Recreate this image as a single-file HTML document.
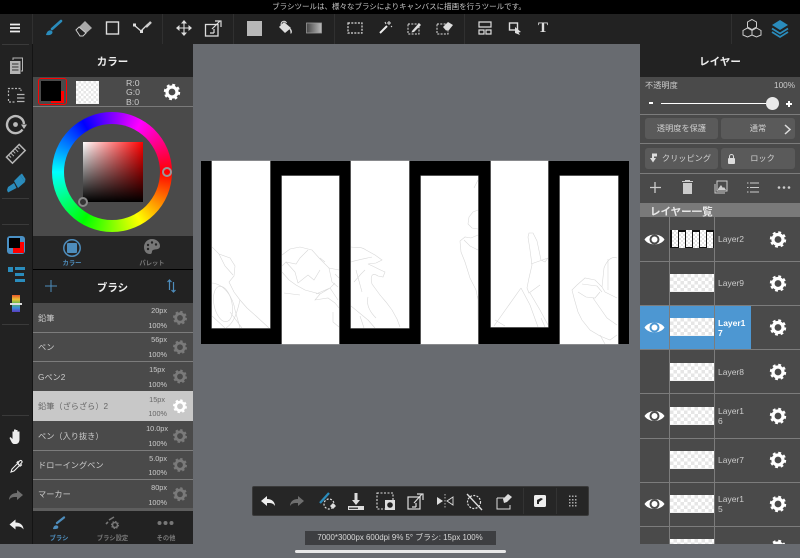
<!DOCTYPE html>
<html><head><meta charset="utf-8">
<style>
html,body{margin:0;padding:0}
body{width:800px;height:558px;overflow:hidden;position:relative;background:#686b70;font-family:"Liberation Sans","Noto Sans CJK JP",sans-serif;color:#ddd}
div{position:absolute;box-sizing:border-box}
.t{white-space:nowrap;line-height:1}
.c{transform:translateX(-50%)}
.chk{background-color:#fff;background-image:conic-gradient(#e6e6e6 25%,#fff 0 50%,#e6e6e6 0 75%,#fff 0);background-size:7px 7px}
.sep{background:#303030}
.btn{background:#5a5a5a;border-radius:3px;height:21px;font-size:8.2px;color:#d0d0d0;text-align:center;line-height:22.5px}
.ln{background:#7c7c7c;height:1px}
.p{background:#fff;box-shadow:0 0 0 .5px #aaa}
svg{position:absolute;overflow:visible}
</style></head><body>
<svg width="0" height="0" style="position:absolute"><defs>
<g id="gear"><circle r="5" fill="none" stroke="currentColor" stroke-width="3.2"/><circle r="7" fill="none" stroke="currentColor" stroke-width="2.4" stroke-dasharray="2.8 2.7"/></g>
<g id="eye"><path d="M-10 0C-6-6.500 6-6.500 10 0C6 6.500-6 6.500-10 0Z" fill="#fff"/><circle r="4" fill="none" stroke="currentColor" stroke-width="2"/></g>
<path id="undo" d="M-7 0L-1-5V-2C4-2 7 1 7 5C5 2 3 2-1 2V5Z" fill="currentColor"/>
<path id="redo" d="M7 0L1-5V-2C-4-2-7 1-7 5C-5 2-3 2 1 2V5Z" fill="currentColor"/>
<clipPath id="panels"><rect x="212" y="161" width="57.500" height="167"/><rect x="281.500" y="176" width="57.500" height="168"/><rect x="351" y="161" width="57.500" height="167"/><rect x="420.500" y="176" width="57.500" height="168"/><rect x="490.500" y="161" width="57.500" height="166"/><rect x="560" y="176" width="57.500" height="168"/></clipPath>
<linearGradient id="gr"><stop offset="0" stop-color="#444"/><stop offset="1" stop-color="#bbb"/></linearGradient>
<linearGradient id="rb" x1="0" y1="0" x2="0" y2="1"><stop offset="0" stop-color="#e8562a"/><stop offset=".25" stop-color="#ecc034"/><stop offset=".5" stop-color="#5cb84a"/><stop offset=".75" stop-color="#3a8ed8"/><stop offset="1" stop-color="#5a3cc0"/></linearGradient>
</defs></svg>

<!-- status -->
<div style="left:0;top:0;width:800px;height:14px;background:#000"></div>
<div class="t c" style="left:399px;top:3px;font-size:7.500px;color:#c8c8c8">ブラシツールは、様々なブラシによりキャンバスに描画を行うツールです。</div>

<!-- toolbar -->
<div style="left:0;top:14px;width:800px;height:30px;background:#222"></div>
<div class="sep" style="left:32px;top:14px;width:1px;height:30px"></div>
<div class="sep" style="left:162px;top:14px;width:1px;height:30px"></div>
<div class="sep" style="left:233px;top:14px;width:1px;height:30px"></div>
<div class="sep" style="left:334px;top:14px;width:1px;height:30px"></div>
<div class="sep" style="left:464px;top:14px;width:1px;height:30px"></div>
<div class="sep" style="left:731px;top:14px;width:1px;height:30px"></div>
<svg style="left:0;top:0" width="800" height="44" fill="none" stroke="#ddd">
<path d="M10 24.500H20M10 28H20M10 31.500H20" stroke="#eee" stroke-width="1.800"/>
<path d="M52 29L61 21" stroke="#2a8cbc" stroke-width="2.600" stroke-linecap="round"/><path d="M46 35c1-4 3-5 5-4.500s2 3 0 4c-1 .6-3 .8-5 .5z" fill="#2a8cbc" stroke="none"/>
<path d="M76 30L85 21L92 28L83 36H80Z" fill="#aaa" stroke="none"/><path d="M76 30L80 36H83L86 33L79 27Z" fill="#222" stroke="#ccc"/>
<rect x="106.500" y="22" width="12" height="12" stroke-width="1.400"/>
<path d="M134 25L141 31L148 24" stroke-width="1.300"/><rect x="133" y="23.500" width="3" height="3" fill="#ddd" stroke="none"/><rect x="140" y="30" width="3" height="3" fill="#ddd" stroke="none"/><path d="M146 27L151 22" stroke="#ccc" stroke-width="2.500"/>
<path d="M184 21V35M177 28H191" stroke-width="1.100"/><path d="M181 23.500L184 20L187 23.500ZM181 32.500L184 36L187 32.500ZM179.500 25L176 28L179.500 31ZM188.500 25L192 28L188.500 31Z" fill="#ddd" stroke="none"/>
<rect x="205.500" y="24.500" width="12.500" height="11.500" stroke-width="1.300"/><path d="M212 29L220 21M215 21H221V27M210 33H214M214 29V33" stroke-width="1.200"/>
<rect x="247" y="21" width="15" height="15" fill="#b8b8b8" stroke="none"/>
<path d="M279 27L284 22L291 28L285 33Z" fill="#ddd" stroke="none"/><path d="M281 25C281 21 285 20 286.500 23" stroke-width="1"/><path d="M290 29C292 31 291 33 290.500 33" stroke="#ddd" stroke-width="1.500"/>
<rect x="306.500" y="23" width="15" height="10" fill="url(#gr)" stroke="#999" stroke-width=".8"/>
<rect x="348" y="23" width="14" height="10" stroke-dasharray="2 1.300" stroke-width="1.200"/>
<path d="M380 33L387 26" stroke="#eee" stroke-width="2"/><path d="M389 21V25M387 23H391M385 22L386 24M391 26L392 27" stroke-width="1"/>
<rect x="408" y="24" width="11" height="10" stroke-dasharray="2 1.300" stroke-width="1"/><path d="M412 31L419 23L421 25L414 32L411.500 32.500Z" fill="#ddd" stroke="none"/>
<rect x="437" y="24" width="11" height="10" stroke-dasharray="2 1.300" stroke-width="1"/><path d="M443 27L448 22L453 25L449 30L446 30.500Z" fill="#ddd" stroke="none"/>
<path d="M479 22H491V27H479ZM479 30H484V34H479ZM486 30H491V34H486Z" stroke-width="1.200"/>
<rect x="509.500" y="23" width="8" height="7" stroke-width="1.400"/><path d="M515 27L521 32L518.500 32.500L520 35L515 33Z" fill="#ddd" stroke="none"/>
<path d="M752 19.500L756.500 22V27L752 29.500L747.500 27V22ZM747.500 28L752 30.500V35L747.500 37L743 35V30.500ZM756.500 28L761 30.500V35L756.500 37L752 35V30.500Z" stroke="#ccc" stroke-width="1"/>
<path d="M780 20L788 25L780 30L772 25Z" fill="#2a8cbc" stroke="none"/><path d="M772 28.500L780 33.500L788 28.500M772 32L780 37L788 32" stroke="#2a8cbc" stroke-width="1.800"/>
</svg>
<div class="t" style="left:538px;top:21px;font-family:'Liberation Serif',serif;font-weight:bold;font-size:15px;color:#ddd">T</div>

<!-- left bar -->
<div style="left:0;top:44px;width:33px;height:500px;background:#222"></div>
<div style="left:32px;top:44px;width:1px;height:500px;background:#141414"></div>
<div class="sep" style="left:2px;top:44px;width:27px;height:1px;background:#3a3a3a"></div>
<div class="sep" style="left:2px;top:198px;width:27px;height:1px;background:#3a3a3a"></div>
<div class="sep" style="left:2px;top:223.500px;width:27px;height:1px;background:#3a3a3a"></div>
<div class="sep" style="left:2px;top:324px;width:27px;height:1px;background:#3a3a3a"></div>
<div class="sep" style="left:2px;top:415px;width:27px;height:1px;background:#3a3a3a"></div>
<svg style="left:0;top:44px" width="33" height="500" fill="none" stroke="#b5b5b5">
<path d="M13 16V14H22.500V27H21" stroke-width="1"/><rect x="10" y="17" width="10.500" height="13" fill="#b5b5b5" stroke="none"/><path d="M12 20H18.500M12 23H18.500M12 26H18.500" stroke="#333" stroke-width="1"/>
<path d="M8.500 52V44.500H21V47M8.500 55V58H15" stroke-dasharray="2 1.500" stroke-width="1.200"/><path d="M17 50.500H24.500M17 54H24.500M17 57.500H24.500" stroke-width="1.300"/>
<path d="M22.500 85.500A8.500 8.500 0 1 1 24 80" stroke-width="2.400" stroke="#bbb"/><circle cx="15.500" cy="80.500" r="2.400" fill="#bbb" stroke="none"/><path d="M21 80.500H27L24 85Z" fill="#bbb" stroke="none"/>
<g transform="rotate(-45 16 110)"><rect x="7" y="105.500" width="18" height="8.500" stroke-width="1.500"/><path d="M10 105.500V109M13 105.500V110M16 105.500V109M19 105.500V110M22 105.500V109" stroke-width="1"/></g>
<path d="M14 137L20 131L25 138L18 144Z" fill="#2a8cbc" stroke="none"/><path d="M20 131L22 129.500L25.500 135L25 138Z" fill="#2a8cbc" stroke="none"/><path d="M8 143L14 139L16.500 144L8 148.500L7 146Z" fill="#2a8cbc" stroke="none"/>
</svg>
<div style="left:7px;top:236px;width:18px;height:18px;border-radius:3px;background:#4a90c4"></div>
<div style="left:13px;top:242px;width:11px;height:10.500px;background:#f00"></div>
<div style="left:9px;top:237.500px;width:10.500px;height:10.500px;background:#000"></div>
<svg style="left:0;top:260px" width="33" height="60" fill="#2a8cbc" stroke="none">
<rect x="8" y="7" width="5" height="5"/><rect x="15" y="7" width="10" height="3"/><rect x="15" y="13" width="9" height="3"/><rect x="15" y="19" width="10" height="3"/>
<rect x="12" y="35" width="8" height="17" style="fill:url(#rb)"/><rect x="10" y="43" width="12" height="2" fill="#ddd"/>
</svg>
<svg style="left:0;top:420px" width="33" height="120" fill="none">
<path d="M11.500 22L9.500 18L10.500 17L12.500 19V11.500L14 11.500V16V9.500H15.800V16V10H17.500V16.500V11.500H19.500V19.500C19.500 22 18 24 16 24H14C13 24 12 23 11.500 22Z" fill="#eee"/>
<path d="M12 49L11 52L14 51L19.500 45.500L17.500 43.500ZM18.500 42.500L19.500 41C21 39.500 23 41.500 21.500 43L20.500 44L21.500 45L20.500 46L17 42.500L18 41.500Z" stroke="#eee" stroke-width="1.100"/>
<use href="#redo" x="16" y="75" color="#6e6e6e"/>
<use href="#undo" x="16.500" y="104.500" color="#eee"/>
</svg>

<!-- color panel -->
<div style="left:33px;top:44px;width:160px;height:500px;background:#222"></div>
<div class="t c" style="left:112.500px;top:57px;font-size:10.500px;font-weight:bold;color:#eee">カラー</div>
<div style="left:33px;top:77px;width:160px;height:159px;background:#4a4a4a"></div>
<div style="left:33px;top:106px;width:160px;height:1px;background:#7a7a7a"></div>
<div style="left:38px;top:78px;width:29px;height:27px;border:1.500px solid #f00;border-radius:3px"></div>
<div style="left:41px;top:81px;width:20px;height:20px;background:#000"></div>
<div style="left:61px;top:91px;width:3px;height:12px;background:#f00"></div>
<div style="left:51px;top:100.500px;width:13px;height:2.500px;background:#f00"></div>
<div class="chk" style="left:75.500px;top:81px;width:23px;height:23px;background-size:5px 5px"></div>
<div class="t" style="left:126px;top:79px;font-size:8.700px;color:#ccc;line-height:9.400px">R:0<br>G:0<br>B:0</div>
<svg style="left:171.500px;top:92px;color:#fff"><use href="#gear"/></svg>
<!-- wheel -->
<div style="left:52px;top:112px;width:120px;height:120px;border-radius:50%;background:conic-gradient(from 90deg,#f00,#ff0,#0f0,#0ff,#00f,#f0f,#f00)"></div>
<div style="left:64px;top:124px;width:96px;height:96px;border-radius:50%;background:#4a4a4a"></div>
<div style="left:82.500px;top:142px;width:60px;height:60px;background:linear-gradient(to bottom,transparent,#000),linear-gradient(to right,#fff,#f00)"></div>
<div style="left:162px;top:167px;width:10px;height:10px;border-radius:50%;border:2px solid #999"></div>
<div style="left:78px;top:197px;width:10px;height:10px;border-radius:50%;border:2px solid #888;background:#333"></div>
<!-- tabs -->
<div style="left:33px;top:236px;width:160px;height:33px;background:#252525"></div>
<div style="left:33px;top:269px;width:160px;height:1px;background:#000"></div>
<svg style="left:33px;top:236px" width="160" height="24">
<circle cx="39" cy="12" r="8.200" fill="none" stroke="#4e8dbc" stroke-width="1.500"/><rect x="34" y="7" width="10" height="10" fill="#4e8dbc" rx="1"/>
<path d="M119 3C114 3 111 7 111 11C111 15 113 18 117 18C120 18 118 15 120 14C122 13 127 14 127 10C127 6 123 3 119 3Z" fill="#777"/><circle cx="115" cy="9" r="1.200" fill="#252525"/><circle cx="119" cy="6.500" r="1.200" fill="#252525"/><circle cx="123" cy="8.500" r="1.200" fill="#252525"/><circle cx="115" cy="13" r="1.200" fill="#252525"/>
</svg>
<div class="t c" style="left:72px;top:260.500px;font-size:6.300px;font-weight:bold;color:#4e8dbc">カラー</div>
<div class="t c" style="left:152px;top:260.500px;font-size:6.300px;font-weight:bold;color:#777">パレット</div>
<!-- brush header -->
<svg style="left:33px;top:270px" width="160" height="33" fill="none" stroke="#4e8dbc">
<path d="M18 10V22M12 16H24" stroke-width="1"/>
<path d="M136.500 10V20M134.500 12L136.500 10L138.500 12M140.500 12V22M138.500 20L140.500 22L142.500 20" stroke-width="1.200"/>
</svg>
<div class="t c" style="left:112.500px;top:282.500px;font-size:10.500px;font-weight:bold;color:#eee">ブラシ</div>
<!-- brushes -->
<div style="left:33px;top:303px;width:160px;height:208px;background:#4a4a4a"></div>
<div class="ln" style="left:33px;top:332px;width:160px"></div>
<div class="ln" style="left:33px;top:361px;width:160px"></div>
<div style="left:33px;top:391px;width:160px;height:30px;background:#c8c8c8"></div>
<div class="ln" style="left:33px;top:450px;width:160px"></div>
<div class="ln" style="left:33px;top:479px;width:160px"></div>
<div class="ln" style="left:33px;top:508px;width:160px;height:3px;background:#5e5e5e"></div>
<div class="t" style="left:38px;top:315px;font-size:8.200px;color:#ccc">鉛筆</div>
<div class="t" style="left:38px;top:344px;font-size:8.200px;color:#ccc">ペン</div>
<div class="t" style="left:38px;top:374px;font-size:8.200px;color:#ccc">Gペン2</div>
<div class="t" style="left:38px;top:403px;font-size:8.200px;color:#666">鉛筆（ざらざら）2</div>
<div class="t" style="left:38px;top:433px;font-size:8.200px;color:#ccc">ペン（入り抜き）</div>
<div class="t" style="left:38px;top:462px;font-size:8.200px;color:#ccc">ドローイングペン</div>
<div class="t" style="left:38px;top:491px;font-size:8.200px;color:#ccc">マーカー</div>
<div class="t" style="right:633px;top:307px;font-size:7.300px;color:#ccc">20px</div>
<div class="t" style="right:633px;top:321.500px;font-size:7.300px;color:#ccc">100%</div>
<div class="t" style="right:633px;top:336px;font-size:7.300px;color:#ccc">56px</div>
<div class="t" style="right:633px;top:350.500px;font-size:7.300px;color:#ccc">100%</div>
<div class="t" style="right:635px;top:366px;font-size:7.300px;color:#ccc">15px</div>
<div class="t" style="right:633px;top:380.500px;font-size:7.300px;color:#ccc">100%</div>
<div class="t" style="right:635px;top:395.500px;font-size:7.300px;color:#666">15px</div>
<div class="t" style="right:633px;top:410px;font-size:7.300px;color:#666">100%</div>
<div class="t" style="right:632px;top:425px;font-size:7.300px;color:#ccc">10.0px</div>
<div class="t" style="right:633px;top:439.500px;font-size:7.300px;color:#ccc">100%</div>
<div class="t" style="right:633px;top:454.500px;font-size:7.300px;color:#ccc">5.0px</div>
<div class="t" style="right:633px;top:468.500px;font-size:7.300px;color:#ccc">100%</div>
<div class="t" style="right:633px;top:484px;font-size:7.300px;color:#ccc">80px</div>
<div class="t" style="right:633px;top:498.500px;font-size:7.300px;color:#ccc">100%</div>
<svg style="left:179.500px;top:0;color:#7a7a7a"><g transform="scale(.85)">
<use href="#gear" y="374"/><use href="#gear" y="408.500"/><use href="#gear" y="443"/><use href="#gear" y="478" color="#fff"/><use href="#gear" y="513"/><use href="#gear" y="547"/><use href="#gear" y="581.500"/></g></svg>
<!-- bottom tabs -->
<svg style="left:33px;top:511px" width="160" height="20" fill="none">
<path d="M24 12L31 6.500" stroke="#4e8dbc" stroke-width="2.300" stroke-linecap="round"/><path d="M20 18c.5-3 2-4 4-3.500s1.500 3 0 3.300c-1 .3-2.500.4-4 .2z" fill="#4e8dbc"/>
<path d="M73 13L75 11M76 9L81 6" stroke="#777" stroke-width="1.600"/><g transform="translate(82,14) scale(.5)" color="#777"><use href="#gear"/></g>
<circle cx="126.500" cy="12" r="2" fill="#777"/><circle cx="132.500" cy="12" r="2" fill="#777"/><circle cx="138.500" cy="12" r="2" fill="#777"/>
</svg>
<div class="t c" style="left:59px;top:535.500px;font-size:6.300px;font-weight:bold;color:#4e8dbc">ブラシ</div>
<div class="t c" style="left:112.500px;top:535.500px;font-size:6.300px;font-weight:bold;color:#777">ブラシ設定</div>
<div class="t c" style="left:166px;top:535.500px;font-size:6.300px;font-weight:bold;color:#777">その他</div>

<!-- canvas -->
<div style="left:200.500px;top:161px;width:428px;height:183px;background:#000"></div>
<div class="p" style="left:212px;top:161px;width:57.500px;height:167px"></div>
<div class="p" style="left:281.500px;top:176px;width:57.500px;height:168px"></div>
<div class="p" style="left:351px;top:161px;width:57.500px;height:167px"></div>
<div class="p" style="left:420.500px;top:176px;width:57.500px;height:168px"></div>
<div class="p" style="left:490.500px;top:161px;width:57.500px;height:166px"></div>
<div class="p" style="left:560px;top:176px;width:57.500px;height:168px"></div>
<svg style="left:0;top:0" width="800" height="558" fill="none" stroke="#d8d8d8" stroke-width=".6">
<g clip-path="url(#panels)">
<path d="M212 247L219 254L230 258L235 266L234 276L229 282L234 292L240 300L247 308L256 316L269 328"/>
<path d="M219 254L225 266L233 275"/>
<ellipse cx="223" cy="304" rx="9" ry="18" transform="rotate(-12 223 304)"/><path d="M212 283C224 284 233 297 235 310L240 328M226 328C232 324 236 318 240 300M230 312L242 328M212 316L225 328"/>
<path d="M282 255L290 249L300 247L312 250L320 259L329 268L332 282L338 287M282 266L286 262L296 264L300 258L308 250M286 262L295 272L298 283L308 275L314 280L320 270M282 272L289 280L296 285L305 290L320 294L330 288L335 283M284 293L300 295M316 294L330 288L338 300M329 268L339 270M320 258L325 262M320 294L315 300L328 298L335 303L339 308M335 274L339 278M333 312V322L339 327"/>
<path d="M351 247C356 248 361 246 366 250L375 255L382 260L376 263L368 264C373 266 380 270 385 272L383 277L378 276C372 272 370 276 372 284L380 295L386 302L392 310L397 319L400 327M351 262C357 260 368 258 372 257M354 282L361 274L365 270M351 306L368 320L375 328M356 270L362 292M368 297C366 305 370 312 376 318M360 316L364 328"/>
<path d="M478 210L473 212L469 217L468 224L472 228L478 229M478 235L471 238L465 237L460 241L461 252L465 262L470 278L476 290L478 300M464 240L470 246L478 250M478 180L474 188M478 296V320"/>
<path d="M528 237L529 233L533 233L537 241L541 260L545 262L548 258M528 237L530 250L532 265L529 278L527 288L529 293L540 285M521 288L494 326M521 288L530 305L538 327M531 264L548 258M530 293L540 310L548 325M541 318L545 327M495 320L505 326"/>
<path d="M617 258C612 256 607 260 604 268L602 287L595 280L585 278L577 285L572 290L574 298L578 312L582 320L590 330L600 336L610 340L617 335M582 284L597 286L602 292M578 292L586 297L595 298L600 292M593 298L600 308L607 318L617 325M602 287L605 292L617 298M608 259V290M600 335L605 344"/>
</g></svg>

<!-- right panel -->
<div style="left:640px;top:44px;width:160px;height:500px;background:#222"></div>
<div class="t c" style="left:720px;top:57px;font-size:10.500px;font-weight:bold;color:#eee">レイヤー</div>
<div style="left:640px;top:77px;width:160px;height:467px;background:#4a4a4a"></div>
<div class="t" style="left:645px;top:82px;font-size:8.200px;color:#ccc">不透明度</div>
<div class="t" style="right:5px;top:81.500px;font-size:8.200px;color:#ccc">100%</div>
<div style="left:648.500px;top:102px;width:4px;height:2px;background:#fff"></div>
<div style="left:661px;top:102.500px;width:112px;height:1.500px;background:#fff"></div>
<div style="left:766px;top:96.500px;width:13px;height:13px;border-radius:50%;background:#eaeaea"></div>
<div style="left:786px;top:103px;width:6px;height:1.500px;background:#fff"></div>
<div style="left:788.300px;top:101px;width:1.500px;height:6px;background:#fff"></div>
<div class="ln" style="left:640px;top:114px;width:160px"></div>
<div class="btn" style="left:645px;top:118px;width:73px">透明度を保護</div>
<div class="btn" style="left:721px;top:118px;width:74px">通常</div>
<svg style="left:782px;top:122px" width="10" height="14" fill="none" stroke="#ddd" stroke-width="1.500"><path d="M3 3L8 7.500L3 12"/></svg>
<div class="ln" style="left:640px;top:143px;width:160px"></div>
<div class="btn" style="left:645px;top:148px;width:73px;padding-left:10px">クリッピング</div>
<div class="btn" style="left:721px;top:148px;width:74px;padding-left:9px">ロック</div>
<svg style="left:640px;top:148px" width="160" height="22" fill="#ddd" stroke="none"><path d="M12 5.500H17V8.500H14V10H16L13 14.500L10 10H12Z"/><rect x="88" y="10" width="7" height="6" rx="1"/><path d="M89.500 10V8.500A2 2 0 0 1 93.500 8.500V10" fill="none" stroke="#ddd"/></svg>
<div class="ln" style="left:640px;top:173px;width:160px"></div>
<svg style="left:640px;top:172px" width="160" height="30" fill="none" stroke="#ccc">
<path d="M15 10V21M10 15.500H21" stroke-width="1.300"/>
<path d="M43 11H52V22H43Z" fill="#ccc" stroke="none"/><path d="M42 9.500H53M45 8.500H50" stroke-width="1"/>
<rect x="77" y="9" width="10" height="10" stroke-width="1"/><path d="M75 12V21H85" stroke-width="1"/><path d="M78 17L81 13L83 16L84 15L86 18H78Z" fill="#ccc" stroke="none"/>
<path d="M110 11H119M110 15.500H119M110 20H119M107 11H108.500M107 15.500H108.500M107 20H108.500" stroke-width="1"/>
<circle cx="139" cy="15.500" r="1.300" fill="#ccc" stroke="none"/><circle cx="144" cy="15.500" r="1.300" fill="#ccc" stroke="none"/><circle cx="149" cy="15.500" r="1.300" fill="#ccc" stroke="none"/>
</svg>
<div style="left:640px;top:203px;width:160px;height:14px;background:#7a7a7a"></div>
<div class="t" style="left:650px;top:206.500px;font-size:10.500px;font-weight:bold;color:#e8e8e8">レイヤー一覧</div>

<!-- layers -->
<div style="left:640px;top:306px;width:111px;height:43.500px;background:#4d97d2"></div>
<div class="ln" style="left:640px;top:261px;width:160px"></div>
<div class="ln" style="left:640px;top:305px;width:160px"></div>
<div class="ln" style="left:640px;top:349px;width:160px"></div>
<div class="ln" style="left:640px;top:393px;width:160px"></div>
<div class="ln" style="left:640px;top:438px;width:160px"></div>
<div class="ln" style="left:640px;top:482px;width:160px"></div>
<div class="ln" style="left:640px;top:526px;width:160px"></div>
<!-- layer2 thumb -->
<div style="left:670px;top:230px;width:44px;height:18px;background:#111"></div>
<div class="chk" style="left:671.500px;top:230px;width:6px;height:16.500px;background-size:4px 4px"></div>
<div class="chk" style="left:678.500px;top:231.500px;width:6px;height:16.500px;background-size:4px 4px"></div>
<div class="chk" style="left:685.500px;top:230px;width:6px;height:16.500px;background-size:4px 4px"></div>
<div class="chk" style="left:692.500px;top:231.500px;width:6px;height:16.500px;background-size:4px 4px"></div>
<div class="chk" style="left:699.500px;top:230px;width:6px;height:16.500px;background-size:4px 4px"></div>
<div class="chk" style="left:706.500px;top:231.500px;width:6px;height:16.500px;background-size:4px 4px"></div>
<div class="chk" style="left:670px;top:274px;width:44px;height:18px"></div>
<div class="chk" style="left:670px;top:318px;width:44px;height:18px"></div>
<div class="chk" style="left:670px;top:363px;width:44px;height:18px"></div>
<div class="chk" style="left:670px;top:407px;width:44px;height:18px"></div>
<div class="chk" style="left:670px;top:451px;width:44px;height:18px"></div>
<div class="chk" style="left:670px;top:495px;width:44px;height:18px"></div>
<div class="chk" style="left:670px;top:539px;width:44px;height:5px"></div>
<div style="left:669px;top:217px;width:1px;height:327px;background:#7c7c7c"></div>
<div style="left:714px;top:217px;width:1px;height:327px;background:#7c7c7c"></div>
<div class="t" style="left:718px;top:235px;font-size:8.500px;color:#ccc">Layer2</div>
<div class="t" style="left:718px;top:279px;font-size:8.500px;color:#ccc">Layer9</div>
<div class="t" style="left:718px;top:318px;font-size:8.500px;color:#fff;font-weight:bold;line-height:10px">Layer1<br>7</div>
<div class="t" style="left:718px;top:367.500px;font-size:8.500px;color:#ccc">Layer8</div>
<div class="t" style="left:718px;top:406px;font-size:8.500px;color:#ccc;line-height:10px">Layer1<br>6</div>
<div class="t" style="left:718px;top:456px;font-size:8.500px;color:#ccc">Layer7</div>
<div class="t" style="left:718px;top:494px;font-size:8.500px;color:#ccc;line-height:10px">Layer1<br>5</div>
<svg style="left:0;top:0" width="800" height="544" color="#4a4a4a">
<use href="#eye" x="654.500" y="239.500"/><use href="#eye" x="654.500" y="327.500" color="#4d97d2"/><use href="#eye" x="654.500" y="416"/><use href="#eye" x="654.500" y="504"/>
<g color="#fff"><use href="#gear" x="778" y="239.500"/><use href="#gear" x="778" y="283.500"/><use href="#gear" x="778" y="327.500"/><use href="#gear" x="778" y="372"/><use href="#gear" x="778" y="416"/><use href="#gear" x="778" y="460"/><use href="#gear" x="778" y="504"/><use href="#gear" x="778" y="548"/></g>
</svg>
<div style="left:640px;top:544px;width:160px;height:14px;background:#686b70"></div>
<div style="left:0;top:544px;width:193px;height:14px;background:#686b70"></div>

<!-- bottom toolbar -->
<div style="left:252px;top:486px;width:337px;height:30px;background:#262626;border:1px solid #3a3a3a;border-radius:2px"></div>
<div style="left:523px;top:488px;width:1px;height:26px;background:#333"></div>
<div style="left:556px;top:488px;width:1px;height:26px;background:#333"></div>
<svg style="left:0;top:0" width="800" height="558" fill="none" stroke="#ddd">
<use href="#undo" x="268" y="501" color="#eee" stroke="none"/><use href="#redo" x="297" y="501" color="#6e6e6e" stroke="none"/>
<path d="M320 503L329 493" stroke="#2a8cbc" stroke-width="2.300"/><circle cx="329" cy="504" r="5" stroke-dasharray="2 1.500" stroke-width="1.200"/><path d="M333 503L336 506L333 509L330 506Z" fill="#ddd" stroke="none"/>
<path d="M356 493V501" stroke-width="3"/><path d="M352 500H360L356 505Z" fill="#ddd" stroke="none"/><rect x="348" y="506" width="16" height="4" fill="#ddd" stroke="none"/><rect x="349" y="507.500" width="9" height="1.500" fill="#444" stroke="none"/>
<rect x="377" y="493" width="16" height="16" stroke-dasharray="2 1.500" stroke-width="1.100"/><rect x="385" y="500" width="10" height="10" fill="#ddd" stroke="none"/><circle cx="390" cy="505" r="2.800" fill="#222" stroke="none"/>
<rect x="408" y="497" width="12" height="12" stroke-width="1.200"/><path d="M414 503L422 494M417 494H423V500M412 507H416M416 503V507" stroke-width="1.200"/>
<path d="M437 497V505L443 501Z" fill="#ddd" stroke="none"/><path d="M453 497V505L447 501Z" stroke-width=".9"/><path d="M445 494V508" stroke-dasharray="1.500 1.500" stroke-width=".8"/>
<circle cx="474" cy="502" r="6.500" stroke-dasharray="2 1.300" stroke-width="1.200"/><path d="M467 494L482 510" stroke-width="1.400"/>
<path d="M497 498H505M497 498V509H510V505" stroke-width="1"/><path d="M503 499L508 494L512 497L507 502L504 503Z" fill="#ddd" stroke="none"/>
<rect x="534" y="495" width="12" height="12" rx="1.500" fill="#eee" stroke="none"/><path d="M537 504V500L541 498L543 499L539 502L539 504Z" fill="#222" stroke="none"/>
<g fill="#aaa" stroke="none"><rect x="569" y="495.500" width="1.500" height="1.500"/><rect x="572" y="495.500" width="1.500" height="1.500"/><rect x="575" y="495.500" width="1.500" height="1.500"/><rect x="569" y="499" width="1.500" height="1.500"/><rect x="572" y="499" width="1.500" height="1.500"/><rect x="575" y="499" width="1.500" height="1.500"/><rect x="569" y="502" width="1.500" height="1.500"/><rect x="572" y="502" width="1.500" height="1.500"/><rect x="575" y="502" width="1.500" height="1.500"/><rect x="569" y="505" width="1.500" height="1.500"/><rect x="572" y="505" width="1.500" height="1.500"/><rect x="575" y="505" width="1.500" height="1.500"/></g>
</svg>
<div style="left:305px;top:531px;width:190.500px;height:13.500px;background:#3d3e41"></div>
<div class="t c" style="left:400px;top:534px;font-size:7.900px;color:#d8d8d8">7000*3000px 600dpi 9% 5° ブラシ: 15px 100%</div>
<div style="left:294.500px;top:549.500px;width:211px;height:3.500px;border-radius:2px;background:#e8e8e8"></div>
</body></html>
